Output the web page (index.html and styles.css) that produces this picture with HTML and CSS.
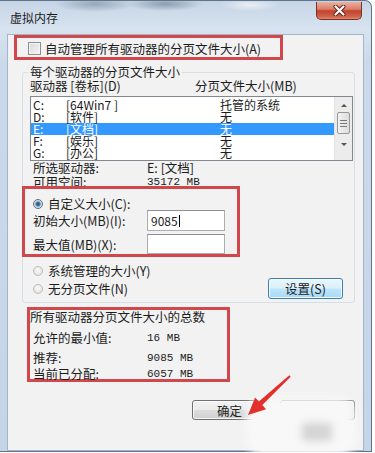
FILE: index.html
```html
<!DOCTYPE html>
<html lang="zh-CN">
<head>
    <meta charset="UTF-8">
    <meta name="viewport" content="width=device-width, initial-scale=1.0">
    <title>虚拟内存</title>
    <link rel="stylesheet" href="styles.css">
</head>
<body>
    <div class="window">
        <!-- Title bar -->
        <div class="titlebar">
            <span class="title">虚拟内存</span>
            <span class="close">
                <svg width="13" height="11" viewBox="0 0 13 11">
                    <path d="M2.5 1.5 L10.5 9.5 M10.5 1.5 L2.5 9.5" stroke="#5b1e16" stroke-width="4" stroke-linecap="round"/>
                    <path d="M2.5 1.5 L10.5 9.5 M10.5 1.5 L2.5 9.5" stroke="#ffffff" stroke-width="2.2" stroke-linecap="round"/>
                </svg>
            </span>
        </div>

        <div class="client">
            <div class="mark mark-auto">
                <span class="checkbox"></span>
                <span>自动管理所有驱动器的分页文件大小(A)</span>
            </div>

            <fieldset class="group">
                <legend>每个驱动器的分页文件大小</legend>
                <div class="cols">
                    <span class="col-drive">驱动器 [卷标](D)</span>
                    <span>分页文件大小(MB)</span>
                </div>

                <div class="list">
                    <div class="rows">
                        <div class="row"><span class="drv">C:</span><span class="vol">[64Win7 ]</span><span>托管的系统</span></div>
                        <div class="row"><span class="drv">D:</span><span class="vol">[软件]</span><span>无</span></div>
                        <div class="row selected"><span class="drv">E:</span><span class="vol">[文档]</span><span>无</span></div>
                        <div class="row"><span class="drv">F:</span><span class="vol">[娱乐]</span><span>无</span></div>
                        <div class="row"><span class="drv">G:</span><span class="vol">[办公]</span><span>无</span></div>
                    </div>
                    <div class="scroll">
                        <span class="arrow-up"></span>
                        <span class="thumb"><i></i><i></i><i></i></span>
                        <span class="arrow-down"></span>
                    </div>
                </div>

                <div class="info"><span class="key">所选驱动器:</span><span>E: [文档]</span></div>
                <div class="info"><span class="key">可用空间:</span><span class="mono">35172 MB</span></div>

                <div class="mark mark-custom">
                    <div class="option"><span class="radio on"></span>自定义大小(C):</div>
                    <div class="field first"><span class="key">初始大小(MB)(I):</span><span class="input">9085<span class="caret"></span></span></div>
                    <div class="field"><span class="key">最大值(MB)(X):</span><span class="input"></span></div>
                </div>

                <div class="option outer"><span class="radio"></span>系统管理的大小(Y)</div>
                <div class="option-row">
                    <div class="option"><span class="radio"></span>无分页文件(N)</div>
                    <button class="btn btn-set">设置(S)</button>
                </div>
            </fieldset>

            <div class="mark mark-total">
                <div class="total-title">所有驱动器分页文件大小的总数</div>
                <div class="total t1"><span class="key">允许的最小值:</span><span class="mono">16 MB</span></div>
                <div class="total t2"><span class="key">推荐:</span><span class="mono">9085 MB</span></div>
                <div class="total t3"><span class="key">当前已分配:</span><span class="mono">6057 MB</span></div>
            </div>

            <div class="actions">
                <button class="btn btn-ok">确定</button>
                <button class="btn btn-cancel">取消</button>
            </div>

            <!-- blurred patch over the cancel button -->
            <div class="smudge"><span class="smudge-grey"></span></div>

            <svg class="pointer" width="56" height="52" viewBox="0 0 56 52">
                <polygon points="49.3,6.3 50.7,7.7 22.3,36.1 26.1,40.2 8,46 15.1,28.4 18.9,32.5" fill="#e2312c"/>
            </svg>
        </div>
    </div>
</body>
</html>
```

FILE: styles.css
```css
body {
    margin: 0;
    width: 375px;
    height: 453px;
    overflow: hidden;
    background: #ffffff;
    font-family: "Noto Sans CJK SC", sans-serif;
    font-size: 12.5px;
    color: #1c1c1c;
}

/* Window frame */
.window {
    width: 372px;
    height: 452px;
    box-sizing: border-box;
    border: 1px solid #60748b;
    border-left: none;
    border-radius: 0 7px 0 0;
    background:
        radial-gradient(ellipse 40px 8px at 95px 3px, rgba(110, 128, 150, 0.55), transparent),
        radial-gradient(ellipse 38px 7px at 165px 3px, rgba(100, 118, 140, 0.6), transparent),
        radial-gradient(ellipse 30px 6px at 250px 4px, rgba(255, 255, 255, 0.6), transparent),
        linear-gradient(180deg, #c6d5e6 0%, #d7e3ef 28px, #cbdaea 60px, #c4d5e8 100%);
}

.titlebar {
    height: 29px;
    display: flex;
    justify-content: space-between;
    align-items: flex-start;
}

.title {
    margin: 9px 0 0 10px;
    line-height: 16px;
    font-size: 12px;
    color: #1b1b1b;
}

.close {
    width: 46px;
    height: 18px;
    margin: 1px 9px 0 0;
    box-sizing: border-box;
    border: 1px solid #7a3227;
    border-top: none;
    border-radius: 0 0 5px 5px;
    background: linear-gradient(180deg, #eab0a0 0%, #d9806b 42%, #c2432d 52%, #d0614a 85%, #e08a70 100%);
    display: flex;
    align-items: center;
    justify-content: center;
}

/* Dialog client area */
.client {
    position: relative;
    margin-left: 8px;
    width: 355px;
    height: 415px;
    background: #f2f2f2;
    box-shadow: 0 0 0 1px #a3b5c9;
}

.mark {
    position: relative;
    box-sizing: border-box;
    border: 3px solid #d0474c;
}

.mark-auto {
    margin: 5px 0 0 6px;
    width: 269px;
    height: 25px;
    display: flex;
    align-items: center;
    padding: 2px 0 0 11px;
    gap: 4px;
}

.checkbox {
    width: 11px;
    height: 11px;
    border: 1px solid #8e8f8f;
    background: linear-gradient(135deg, #d8d8d8, #f6f6f6);
    box-shadow: inset 0 0 0 1px #f4f4f4;
}

/* Group box */
.group {
    margin: 5px 0 0 14px;
    padding: 0 0 3px 0;
    width: 333px;
    box-sizing: border-box;
    min-inline-size: 0;
    border: 1px solid #d5dfe5;
    border-radius: 3px;
}

.group legend {
    margin-left: 5px;
    padding: 0 2px;
    line-height: 14px;
    height: 14px;
}

.cols {
    height: 14px;
    line-height: 14px;
    display: flex;
    padding-left: 7px;
}

.col-drive {
    width: 165px;
}

.list {
    margin: 3px 0 0 7px;
    width: 323px;
    height: 65px;
    box-sizing: border-box;
    border: 1px solid #828790;
    background: #ffffff;
    display: flex;
}

.rows {
    flex: 1;
    padding-top: 2px;
}

.row {
    height: 12px;
    line-height: 12px;
    display: flex;
    font-size: 12px;
}

.row.selected {
    background: #3399ff;
    color: #ffffff;
}

.drv {
    width: 35px;
    padding-left: 2px;
    box-sizing: border-box;
}

.vol {
    width: 154px;
}

.scroll {
    width: 17px;
    background: #ececec;
    border-left: 1px solid #e2e2e2;
    display: flex;
    flex-direction: column;
    align-items: center;
}

.arrow-up,
.arrow-down {
    width: 0;
    height: 0;
    border-left: 3px solid transparent;
    border-right: 3px solid transparent;
}

.arrow-up {
    margin-top: 7px;
    border-bottom: 3px solid #555;
}

.arrow-down {
    margin-top: 9px;
    border-top: 3px solid #555;
}

.thumb {
    margin-top: 5px;
    width: 13px;
    height: 22px;
    box-sizing: border-box;
    border: 1px solid #979797;
    border-radius: 2px;
    background: linear-gradient(90deg, #f3f3f3, #dcdcdc);
    display: flex;
    flex-direction: column;
    align-items: center;
    justify-content: center;
    gap: 2px;
}

.thumb i {
    width: 7px;
    height: 1px;
    background: #777;
}

.info {
    height: 14px;
    line-height: 14px;
    padding-left: 10px;
    display: flex;
}

.info:first-of-type {
    margin-top: 15px;
}

.key {
    width: 114px;
    flex-shrink: 0;
}

.mono {
    font-family: "Liberation Mono", monospace;
    font-size: 11px;
}

.mark-custom {
    margin: -3px 0 0 -1px;
    width: 218px;
    height: 71px;
    padding-top: 8px;
}

.option {
    height: 14px;
    line-height: 14px;
    display: flex;
    align-items: center;
    padding-left: 8px;
    gap: 5px;
}

.option.outer {
    margin-top: 7px;
    padding-left: 10px;
}

.radio {
    width: 10px;
    height: 10px;
    box-sizing: border-box;
    border-radius: 50%;
    border: 1px solid #bdbdbd;
    background: radial-gradient(circle at 50% 40%, #fafafa, #dcdcdc);
}

.radio.on {
    border-color: #6b6b6b;
    background: radial-gradient(circle, #1f4f7c 0, #3e7fb8 2px, #b8cfe4 3px, #e8e8e8 4px);
}

.field {
    height: 21px;
    display: flex;
    align-items: center;
    padding-left: 8px;
    margin-top: 3px;
}

.field.first {
    margin-top: -1px;
}

.field:last-child {
    height: 20px;
}

.input {
    width: 78px;
    height: 100%;
    box-sizing: border-box;
    border: 1px solid #abadb3;
    border-top-color: #8e9096;
    background: #ffffff;
    padding-left: 3px;
    font-size: 12px;
    display: flex;
    align-items: center;
}

.caret {
    width: 1px;
    height: 12px;
    margin-left: 1px;
    background: #000;
}

.option-row {
    height: 21px;
    display: flex;
    align-items: center;
    justify-content: space-between;
    padding: 0 11px 0 2px;
}

/* Buttons */
.btn {
    font-family: "Noto Sans CJK SC", sans-serif;
    font-size: 12.5px;
    color: #1c1c1c;
    padding: 0;
    border: 1px solid #707070;
    border-radius: 3px;
    background: linear-gradient(180deg, #f2f2f2 0%, #ebebeb 48%, #dddddd 52%, #cfcfcf 100%);
    box-shadow: inset 0 0 0 1px rgba(255, 255, 255, 0.8);
}

.btn-set {
    width: 75px;
    height: 21px;
    border-color: #3c7fb1;
    background: linear-gradient(180deg, #eaf6fd 0%, #d9f0fc 48%, #bee6fd 52%, #a7d9f5 100%);
}

.mark-total {
    margin: 4px 0 0 19px;
    width: 203px;
    height: 75px;
}

.total-title {
    height: 14px;
    line-height: 14px;
}

.total {
    height: 14px;
    line-height: 14px;
    padding-left: 3px;
    display: flex;
}

.t1 { margin-top: 7px; }
.t2 { margin-top: 6px; }
.t3 { margin-top: 2px; }

.actions {
    margin-top: 18px;
    display: flex;
    justify-content: flex-end;
    gap: 13px;
    padding-right: 8px;
}

.btn-ok,
.btn-cancel {
    width: 75px;
    height: 20px;
}

/* Overlays: blurred patch and red pointer arrow */
.smudge {
    position: absolute;
    left: 238px;
    top: 362px;
    width: 110px;
    height: 60px;
    border-radius: 18px;
    background: #f8f8f8;
    filter: blur(4px);
}

.smudge-grey {
    position: absolute;
    left: 56px;
    top: 26px;
    width: 30px;
    height: 18px;
    background: #d4d4d4;
}

.pointer {
    position: absolute;
    left: 232px;
    top: 334px;
}
```
